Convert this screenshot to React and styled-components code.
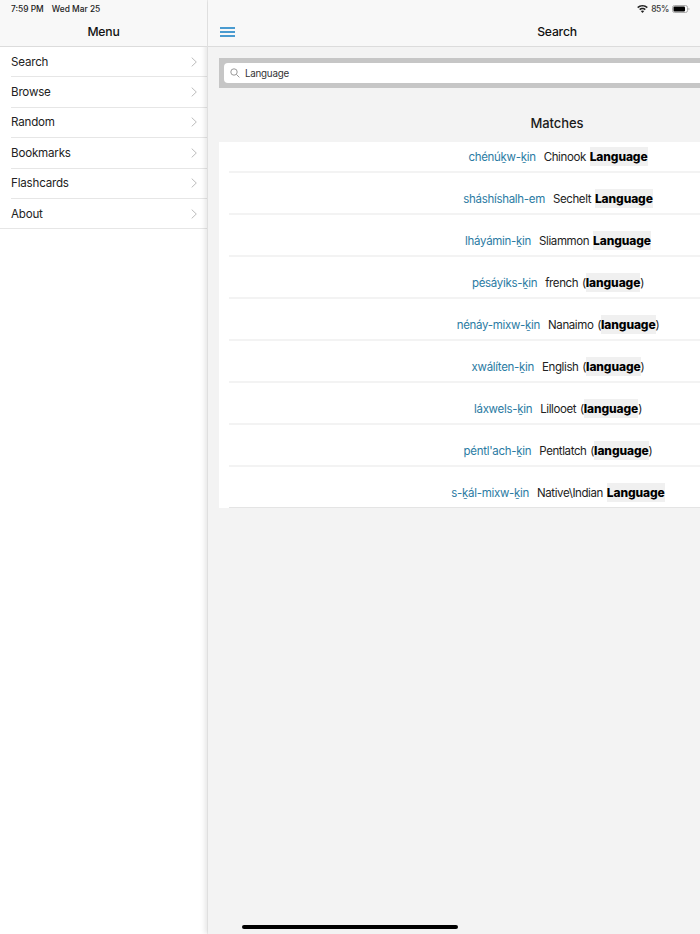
import styled, { createGlobalStyle } from 'styled-components'

const GlobalStyle = createGlobalStyle`
  html, body { margin: 0; padding: 0; }
  body { font-family: Inter, "Noto Sans", sans-serif; background: #f3f3f3; }
`

const Page = styled.div`
  position: relative;
  display: flex;
  width: 700px;
  height: 934px;
  overflow: hidden;
  background: #f3f3f3;
  color: #111;
`

const Sidebar = styled.aside`
  flex: none;
  width: 207px;
  background: #fff;
`

const NavBar = styled.header`
  box-sizing: border-box;
  height: 47px;
  padding-top: 17px;
  background: #f8f8f8;
  border-bottom: 1px solid #dcdcdc;
  text-align: center;
  font-size: 12.2px;
  font-weight: 500;
  letter-spacing: -0.2px;
  line-height: 29px;
  position: relative;
`

const MenuList = styled.nav`
  padding-left: 11px;
`

const MenuRow = styled.div`
  box-sizing: border-box;
  height: 30.4px;
  display: flex;
  align-items: center;
  justify-content: space-between;
  padding-right: 10px;
  border-bottom: 1px solid #e6e6e6;
  font-size: 11.6px;
  letter-spacing: -0.2px;
  color: #222;
  margin-left: ${p => (p.$last ? '-11px' : '0')};
  padding-left: ${p => (p.$last ? '11px' : '0')};
`

const Main = styled.main`
  flex: none;
  width: 698px;
  margin-left: 1px;
  box-shadow: -3px 0 5px rgba(0, 0, 0, 0.1);
  background: #f3f3f3;
  min-height: 100%;
`

const MenuButton = styled.span`
  position: absolute;
  left: 12px;
  top: 27px;
  display: flex;
  flex-direction: column;
  gap: 2.5px;
  width: 14.5px;
  & > i {
    display: block;
    height: 1.5px;
    background: #4a9bd0;
  }
`

const SearchWrap = styled.div`
  box-sizing: border-box;
  margin: 11px 11px 0;
  height: 30px;
  padding: 5px;
  background: #c6c6c6;
`

const SearchField = styled.div`
  height: 20px;
  display: flex;
  align-items: center;
  gap: 5px;
  padding-left: 6px;
  background: #fff;
  border-radius: 4px;
  font-size: 9.8px;
  letter-spacing: -0.25px;
  color: #333;
`

const Heading = styled.h2`
  margin: 0;
  padding-top: 25px;
  height: 29px;
  box-sizing: content-box;
  text-align: center;
  font-size: 13px;
  font-weight: 500;
  letter-spacing: -0.05px;
  line-height: 20px;
  color: #1a1a1a;
`

const Results = styled.div`
  margin: 0 11px;
  background: #fff;
`

const ResultRow = styled.div`
  box-sizing: border-box;
  height: ${p => (p.$first ? '31px' : p.$last ? '41px' : '42px')};
  margin-left: 10px;
  padding-top: ${p => (p.$first ? '0' : '11px')};
  padding-right: 8px;
  display: flex;
  justify-content: center;
  align-items: center;
  gap: 8px;
  border-bottom: ${p => (p.$last ? '1px solid #e4e4e4' : '2px solid #f3f3f3')};
  font-size: 11.5px;
  letter-spacing: -0.25px;
`

const Word = styled.span`
  color: #2b7ba3;
  letter-spacing: -0.3px;
`

const Gloss = styled.span`
  color: #222;
  letter-spacing: -0.4px;
  word-spacing: 1px;
`

const Hit = styled.b`
  font-weight: 800;
  font-size: 12px;
  letter-spacing: -0.1px;
  color: #000;
  background: #f0f0f0;
  padding: 2px 0;
`

const StatusLeft = styled.div`
  position: absolute;
  left: 11px;
  top: 3.5px;
  font-size: 8.4px;
  font-weight: 500;
  line-height: 11px;
  color: #222;
  & > span { margin-right: 8px; }
`

const StatusRight = styled.div`
  position: absolute;
  right: 10px;
  top: 3.5px;
  display: flex;
  align-items: center;
  gap: 3px;
  font-size: 8.4px;
  font-weight: 500;
  letter-spacing: -0.3px;
  line-height: 11px;
  color: #333;
`

const HomeBar = styled.div`
  position: absolute;
  left: 242px;
  bottom: 5px;
  width: 216px;
  height: 4px;
  border-radius: 2px;
  background: #000;
`

const Chevron = () => (
  <svg width="6" height="10" viewBox="0 0 6 10" fill="none" stroke="#bcbcbc" strokeWidth="1">
    <path d="M.7.6 5.3 5 .7 9.4" />
  </svg>
)

const SearchIcon = () => (
  <svg width="10" height="10" viewBox="0 0 10 10" fill="none" stroke="#999" strokeWidth="1">
    <circle cx="4" cy="4" r="3.2" />
    <path d="M6.4 6.4 9.4 9.4" />
  </svg>
)

const WifiIcon = () => (
  <svg width="11" height="8" viewBox="0 0 11 8" fill="#222">
    <path d="M5.5 0C3.4 0 1.6.8.2 2.1l1 1.1C2.3 2.1 3.8 1.5 5.5 1.5s3.2.6 4.3 1.7l1-1.1C9.4.8 7.6 0 5.5 0Z" />
    <path d="M5.5 2.8c-1.3 0-2.4.5-3.3 1.3l1 1.1c.6-.6 1.4-.9 2.3-.9s1.7.3 2.3.9l1-1.1c-.9-.8-2-1.3-3.3-1.3Z" />
    <path d="M5.5 5.4c-.7 0-1.2.2-1.7.7L5.5 8l1.7-1.9c-.5-.5-1-.7-1.7-.7Z" />
  </svg>
)

const BatteryIcon = () => (
  <svg width="18" height="8" viewBox="0 0 18 8">
    <rect x=".5" y=".5" width="15" height="7" rx="2" fill="none" stroke="#aaa" />
    <rect x="1.5" y="1.5" width="11.5" height="5" rx="1" fill="#000" />
    <path d="M16.5 2.8c.6.2 1 .7 1 1.2s-.4 1-1 1.2Z" fill="#aaa" />
  </svg>
)

const menu = ['Search', 'Browse', 'Random', 'Bookmarks', 'Flashcards', 'About']

const results = [
  { word: 'chénúḵw-ḵin', gloss: 'Chinook ', hit: 'Language' },
  { word: 'sháshíshalh-em', gloss: 'Sechelt ', hit: 'Language' },
  { word: 'lháyámin-ḵin', gloss: 'Sliammon ', hit: 'Language' },
  { word: 'pésáyiks-ḵin', gloss: 'french (', hit: 'language', close: ')' },
  { word: 'nénáy-mixw-ḵin', gloss: 'Nanaimo (', hit: 'language', close: ')' },
  { word: 'xwálíten-ḵin', gloss: 'English (', hit: 'language', close: ')' },
  { word: 'láxwels-ḵin', gloss: 'Lillooet (', hit: 'language', close: ')' },
  { word: "péntl'ach-ḵin", gloss: 'Pentlatch (', hit: 'language', close: ')' },
  { word: 's-ḵál-mixw-ḵin', gloss: 'Native\\Indian ', hit: 'Language' },
]

export default function App() {
  return (
    <>
      <GlobalStyle />
      <Page>
        <Sidebar>
          <NavBar>Menu</NavBar>
          <MenuList>
            {menu.map((item, i) => (
              <MenuRow key={item} $last={i === menu.length - 1}>
                {item}
                <Chevron />
              </MenuRow>
            ))}
          </MenuList>
        </Sidebar>
        <Main>
          <NavBar>
            <MenuButton><i /><i /><i /></MenuButton>
            Search
          </NavBar>
          <SearchWrap>
            <SearchField>
              <SearchIcon />
              Language
            </SearchField>
          </SearchWrap>
          <Heading>Matches</Heading>
          <Results>
            {results.map((r, i) => (
              <ResultRow key={r.word} $first={i === 0} $last={i === results.length - 1}>
                <Word>{r.word}</Word>
                <Gloss>
                  {r.gloss}
                  <Hit>{r.hit}</Hit>
                  {r.close}
                </Gloss>
              </ResultRow>
            ))}
          </Results>
        </Main>
        <StatusLeft><span>7:59 PM</span>Wed Mar 25</StatusLeft>
        <StatusRight>
          <WifiIcon />
          85%
          <BatteryIcon />
        </StatusRight>
        <HomeBar />
      </Page>
    </>
  )
}
